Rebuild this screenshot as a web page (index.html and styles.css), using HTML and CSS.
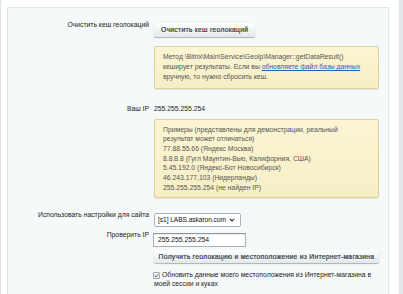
FILE: index.html
```html
<!DOCTYPE html>
<html>

<head>
    <title>Геолокация</title>
    <link rel="stylesheet" href="styles.css">
</head>

<body>
    <div class="panel">
        <div class="row rowClear">
            <div class="rowLabel">Очистить кеш геолокаций</div>
            <div class="rowField">
                <span class="button">Очистить кеш геолокаций</span>
            </div>
        </div>
        <div class="row rowNote1">
            <div class="rowLabel"></div>
            <div class="note">
                Метод \Bitrix\Main\Service\GeoIp\Manager::getDataResult()<br>
                кеширует результаты. Если вы <a href="#">обновляете файл базы данных</a><br>
                вручную, то нужно сбросить кеш.
            </div>
        </div>
        <div class="row rowIp">
            <div class="rowLabel rowLabelPlain">Ваш IP</div>
            <div class="rowField">255.255.255.254</div>
        </div>
        <div class="row rowNote2">
            <div class="rowLabel"></div>
            <div class="note note2">
                Примеры (представлены для демонстрации, реальный<br>
                результат может отличаться)<br>
                77.88.55.66 (Яндекс Москва)<br>
                8.8.8.8 (Гугл Маунтин-Вью, Калифорния, США)<br>
                5.45.192.0 (Яндекс-Бот Новосибирск)<br>
                46.243.177.103 (Нидерланды)<br>
                255.255.255.254 (не найден IP)
            </div>
        </div>
        <div class="row rowSite">
            <div class="rowLabel">Использовать настройки для сайта</div>
            <div class="rowField">
                <div class="select">
                    <span>[s1] LABS.askaron.com</span>
                    <svg width="6" height="4" viewBox="0 0 6 4"><path d="M0.8 0.8 L3 3 L5.2 0.8" fill="none" stroke="#333" stroke-width="1.1"/></svg>
                </div>
            </div>
        </div>
        <div class="row rowCheck">
            <div class="rowLabel">Проверить IP</div>
            <div class="rowField">
                <div class="input">255.255.255.254</div>
            </div>
        </div>
        <div class="row rowGet">
            <div class="rowLabel"></div>
            <div class="rowField">
                <span class="button buttonWide">Получить геолокацию и местоположение из Интернет-магазина</span>
            </div>
        </div>
        <div class="row rowUpdate">
            <div class="rowLabel"></div>
            <div class="rowField checkText">
                <span class="checkbox"><svg width="5" height="5" viewBox="0 0 5 5"><path d="M0.7 2.6 L2 3.9 L4.3 1" fill="none" stroke="#555" stroke-width="0.9"/></svg></span>Обновить данные моего местоположения из Интернет-магазина в моей сессии и куках
            </div>
        </div>
    </div>
</body>

</html>
```

FILE: styles.css
```css
body {
    margin: 0;
    height: 294px;
    overflow: hidden;
    padding: 7px 10px 0 6px;
    box-sizing: border-box;
    border-left: 1px solid #dde3e5;
    border-right: 4px solid #e2e8ea;
    background-color: #ffffff;
    font-family: "Liberation Sans", Arial, sans-serif;
    font-size: 6.8px;
    color: #1c1c1c;
}

.panel {
    height: 100%;
    box-sizing: border-box;
    padding-top: 15px;
    background-color: #f5f9f9;
    border: 1px solid #dfe6e7;
    border-bottom: none;
}

.row {
    display: grid;
    grid-template-columns: 141px 225px;
    column-gap: 5px;
    align-items: start;
}

.rowLabel {
    text-align: right;
    line-height: 10px;
    margin-top: -3px;
}

.rowLabelPlain {
    margin-top: 0;
}

.rowField {
    line-height: 10px;
}

.rowNote1 {
    margin-top: 9px;
}

.rowIp {
    margin-top: 15px;
}

.rowNote2 {
    margin-top: 5px;
}

.rowSite {
    margin-top: 15px;
}

.rowCheck {
    margin-top: 6px;
}

.rowGet {
    margin-top: 3px;
}

.rowUpdate {
    margin-top: 8px;
}

.button {
    display: inline-block;
    height: 13.5px;
    line-height: 13.5px;
    padding: 0 7px;
    border-radius: 2px;
    background: linear-gradient(#ffffff, #e2e8ea);
    box-shadow: 0 0 1px rgba(0, 0, 0, 0.15), 0 1px 1px rgba(0, 0, 0, 0.28), inset 0 1px #ffffff;
    color: #2f3a42;
    letter-spacing: 0.25px;
    -webkit-text-stroke: 0.2px #2f3a42;
    text-shadow: 0 1px rgba(255, 255, 255, 0.7);
    white-space: nowrap;
}

.buttonWide {
    width: 225px;
    padding: 0;
    text-align: center;
}

.note {
    padding: 5.5px 8px;
    border: 1px solid #ddd29b;
    border-radius: 2px;
    background: linear-gradient(#fbf5d3, #f6eec5);
    box-shadow: 0 1px 1px rgba(0, 0, 0, 0.08);
    color: #555555;
    line-height: 10px;
}

.note2 {
    padding: 5px 8px;
    line-height: 9.7px;
}

.note a {
    color: #2067b0;
    text-decoration: underline;
}

.select {
    display: flex;
    align-items: center;
    gap: 3px;
    width: 87px;
    height: 14px;
    padding: 0 2px 0 3px;
    box-sizing: border-box;
    border: 1px solid #a9b4b8;
    border-radius: 2px;
    background-color: #ffffff;
    color: #111111;
    font-size: 6.6px;
    letter-spacing: -0.05px;
    white-space: nowrap;
    overflow: hidden;
}

.select svg {
    flex-shrink: 0;
}

.input {
    width: 93px;
    height: 13.5px;
    line-height: 12px;
    margin-left: -1px;
    padding: 0 4px;
    box-sizing: border-box;
    border: 1px solid #a6afb3;
    border-top-color: #8d979b;
    background-color: #ffffff;
    box-shadow: inset 0 1px 1px rgba(0, 0, 0, 0.08);
    color: #111111;
}

.checkText {
    line-height: 8.3px;
    color: #1c1c1c;
}

.checkbox {
    display: inline-flex;
    align-items: center;
    justify-content: center;
    width: 7px;
    height: 7px;
    margin: 0 2px 0 -1px;
    vertical-align: -1px;
    box-sizing: border-box;
    border: 1px solid #a3abae;
    border-radius: 1px;
    background: linear-gradient(#ffffff, #e4e8e9);
}
```
